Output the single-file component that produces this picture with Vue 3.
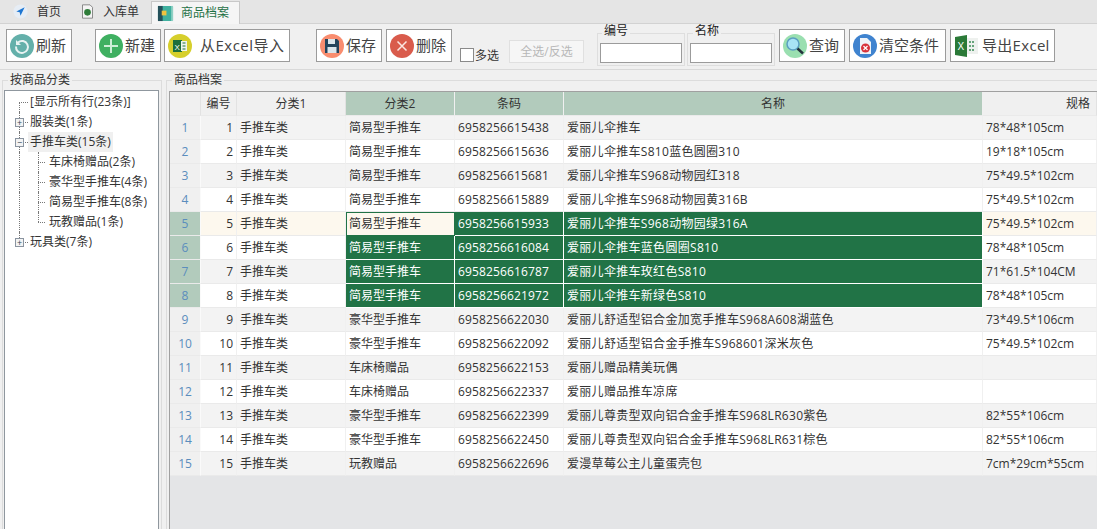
<script setup>
const tree = [
  { label: '[显示所有行(23条)]', kind: 'leaf' },
  { label: '服装类(1条)', kind: 'plus' },
  { label: '手推车类(15条)', kind: 'minus', active: true },
  { label: '车床椅赠品(2条)', kind: 'child' },
  { label: '豪华型手推车(4条)', kind: 'child' },
  { label: '简易型手推车(8条)', kind: 'child' },
  { label: '玩教赠品(1条)', kind: 'child', last: true },
  { label: '玩具类(7条)', kind: 'plus', last: true },
]

const rows = [
  ['手推车类', '简易型手推车', '6958256615438', '爱丽儿伞推车', '78*48*105cm'],
  ['手推车类', '简易型手推车', '6958256615636', '爱丽儿伞推车S810蓝色圆圈310', '19*18*105cm'],
  ['手推车类', '简易型手推车', '6958256615681', '爱丽儿伞推车S968动物园红318', '75*49.5*102cm'],
  ['手推车类', '简易型手推车', '6958256615889', '爱丽儿伞推车S968动物园黄316B', '75*49.5*102cm'],
  ['手推车类', '简易型手推车', '6958256615933', '爱丽儿伞推车S968动物园绿316A', '75*49.5*102cm'],
  ['手推车类', '简易型手推车', '6958256616084', '爱丽儿伞推车蓝色圆圈S810', '78*48*105cm'],
  ['手推车类', '简易型手推车', '6958256616787', '爱丽儿伞推车玫红色S810', '71*61.5*104CM'],
  ['手推车类', '简易型手推车', '6958256621972', '爱丽儿伞推车新绿色S810', '78*48*105cm'],
  ['手推车类', '豪华型手推车', '6958256622030', '爱丽儿舒适型铝合金加宽手推车S968A608湖蓝色', '73*49.5*106cm'],
  ['手推车类', '豪华型手推车', '6958256622092', '爱丽儿舒适型铝合金手推车S968601深米灰色', '75*49.5*102cm'],
  ['手推车类', '车床椅赠品', '6958256622153', '爱丽儿赠品精美玩偶', ''],
  ['手推车类', '车床椅赠品', '6958256622337', '爱丽儿赠品推车凉席', ''],
  ['手推车类', '豪华型手推车', '6958256622399', '爱丽儿尊贵型双向铝合金手推车S968LR630紫色', '82*55*106cm'],
  ['手推车类', '豪华型手推车', '6958256622450', '爱丽儿尊贵型双向铝合金手推车S968LR631棕色', '82*55*106cm'],
  ['手推车类', '玩教赠品', '6958256622696', '爱漫草莓公主儿童蛋壳包', '7cm*29cm*55cm'],
]

const selected = [5, 6, 7, 8]
const isSel = (i) => selected.includes(i + 1)
</script>

<template>
  <div class="page">
    <div class="tabs">
      <div class="tab">
        <svg viewBox="0 0 18 18"><circle cx="9" cy="9" r="8.500" fill="#e6edf5"/><path d="M14 4 4 9l4 1 1 4z" fill="#1d76d2"/></svg>
        <span>首页</span>
      </div>
      <div class="tab t2">
        <svg viewBox="0 0 18 18"><path d="M3 1h9l3 3v13H3z" fill="#f4f4f4" stroke="#777"/><circle cx="9" cy="10" r="4" fill="#2f7d3a"/></svg>
        <span>入库单</span>
      </div>
      <div class="tab on">
        <svg viewBox="0 0 18 18"><rect x="1" y="1" width="16" height="16" rx="1" fill="#3fb09f"/><rect x="1" y="1" width="5" height="16" fill="#24505a"/><rect x="15" y="1" width="2" height="16" fill="#8fd0c4"/><rect x="5" y="6" width="5" height="5" fill="#f0c23e"/></svg>
        <span>商品档案</span>
      </div>
    </div>

    <div class="toolbar">
      <button class="btn b-refresh">
        <svg width="24" height="24" viewBox="0 0 24 24"><circle cx="12" cy="12" r="12" fill="#64b0aa"/><path d="M8 8.500a6 6 0 1 1-2 4" fill="none" stroke="#e8f3f2" stroke-width="2"/><path d="M6 6v5h5z" fill="#e8f3f2"/></svg>
        <span>刷新</span>
      </button>
      <button class="btn b-new">
        <svg width="24" height="24" viewBox="0 0 24 24"><circle cx="12" cy="12" r="12" fill="#3fb061"/><path d="M12 5v14M5 12h14" stroke="#cdeed6" stroke-width="2"/></svg>
        <span>新建</span>
      </button>
      <button class="btn b-import">
        <svg width="24" height="24" viewBox="0 0 24 24"><circle cx="12" cy="12" r="12" fill="#d6cf2c"/><rect x="5" y="6" width="9" height="12" fill="#1e6f3c"/><rect x="13" y="7" width="6" height="10" fill="#eef4ee"/><path d="M14.500 9h3M14.500 12h3M14.500 15h3" stroke="#1e6f3c"/><text x="6.500" y="15.500" font-size="8" fill="#fff" font-family="Liberation Sans">X</text></svg>
        <span class="wide">从Excel导入</span>
      </button>
      <button class="btn b-save">
        <svg width="24" height="24" viewBox="0 0 24 24"><circle cx="12" cy="12" r="12" fill="#f98d6f"/><path d="M5 5h12l2 2v12H5z" fill="#24445c"/><rect x="8" y="5" width="7" height="5" fill="#dce6ec"/><rect x="7.500" y="13" width="9" height="6" fill="#dce6ec"/></svg>
        <span>保存</span>
      </button>
      <button class="btn b-del">
        <svg width="24" height="24" viewBox="0 0 24 24"><circle cx="12" cy="12" r="12" fill="#d95b4c"/><path d="M7.500 7.500l9 9M16.500 7.500l-9 9" stroke="#fbe6e2" stroke-width="1.500"/></svg>
        <span>删除</span>
      </button>
      <label class="multi"><i class="box"></i>多选</label>
      <div class="all">全选/反选</div>
      <fieldset class="field f-code">
        <legend>编号</legend>
        <div class="input"></div>
      </fieldset>
      <fieldset class="field f-name">
        <legend>名称</legend>
        <div class="input"></div>
      </fieldset>
      <button class="btn b-query">
        <svg width="24" height="24" viewBox="0 0 24 24"><circle cx="12" cy="12" r="12" fill="#9adfb0"/><circle cx="10" cy="10" r="6" fill="#a8e4f5" stroke="#5a9fc0" stroke-width="1.500"/><path d="M14.500 14.500l5.500 5" stroke="#24323c" stroke-width="2.500"/></svg>
        <span>查询</span>
      </button>
      <button class="btn b-clear">
        <svg width="24" height="24" viewBox="0 0 24 24"><circle cx="12" cy="12" r="12" fill="#3f83cf"/><path d="M7 4h7l4 4v12H7z" fill="#eef3f8"/><circle cx="12.500" cy="14" r="4.500" fill="#d8323a"/><path d="M10.500 12l4 4M14.500 12l-4 4" stroke="#fff" stroke-width="1.200"/></svg>
        <span>清空条件</span>
      </button>
      <button class="btn b-export">
        <svg width="24" height="24" viewBox="0 0 24 24"><rect x="12" y="4" width="12" height="16" fill="#eef1ee"/><path d="M15 8h6M15 12h6M15 16h6" stroke="#3a8a55" stroke-width="1.500" stroke-dasharray="2 1"/><path d="M1 3l12-2v22L1 21z" fill="#2b7a38"/><text x="3.500" y="16" font-size="10" fill="#fff" font-family="Liberation Sans">X</text></svg>
        <span class="wide">导出Excel</span>
      </button>
    </div>

    <div class="body">
      <fieldset class="side">
        <legend>按商品分类</legend>
        <div class="tree">
          <div v-for="n in tree" :key="n.label" class="node" :class="[n.kind, { last: n.last }]">
            <i v-if="n.kind === 'plus' || n.kind === 'minus'" class="toggle">{{ n.kind === 'plus' ? '+' : '−' }}</i>
            <span class="lbl" :class="{ active: n.active }">{{ n.label }}</span>
          </div>
        </div>
      </fieldset>

      <fieldset class="main">
        <legend>商品档案</legend>
        <div class="grid">
          <div class="row head">
            <div class="c c0"></div>
            <div class="c c1">编号</div>
            <div class="c c2">分类1</div>
            <div class="c c3 hl">分类2</div>
            <div class="c c4 hl">条码</div>
            <div class="c c5 hl">名称</div>
            <div class="c c6 spec">规格</div>
          </div>
          <div v-for="(r, i) in rows" :key="r[2]" class="row" :class="{ odd: i % 2 === 0, cur: i === 4 }">
            <div class="c c0" :class="{ hl: isSel(i) }">{{ i + 1 }}</div>
            <div class="c c1">{{ i + 1 }}</div>
            <div class="c c2">{{ r[0] }}</div>
            <div class="c c3" :class="{ sel: isSel(i) && i !== 4, focus: i === 4 }">{{ r[1] }}</div>
            <div class="c c4" :class="{ sel: isSel(i) }">{{ r[2] }}</div>
            <div class="c c5" :class="{ sel: isSel(i) }">{{ r[3] }}</div>
            <div class="c c6">{{ r[4] }}</div>
          </div>
        </div>
      </fieldset>
    </div>
  </div>
</template>

<style>
html, body { margin: 0; background: #f0f0f0; overflow: hidden; }
</style>

<style scoped>
.page {
  width: 1097px;
  height: 529px;
  overflow: hidden;
  background: #f0f0f0;
  font-family: "Open Sans", "Noto Sans CJK SC", sans-serif;
  font-size: 12px;
  color: #333;
}
.tabs {
  height: 24px;
  background: #e5e5e5;
  border-bottom: 1px solid #d2d2d2;
  display: flex;
  padding-left: 13px;
  box-sizing: border-box;
}
.tab {
  display: flex;
  align-items: center;
  gap: 9px;
  height: 23px;
  margin-right: 19px;
  line-height: 20px;
}
.tab svg { width: 15px; height: 15px; flex: none; }
.tab.t2 { gap: 8px; margin-right: 12px; }
.tab.on {
  margin: 1px 0 0 0;
  padding: 0 10px 0 5px;
  gap: 7px;
  height: 23px;
  box-sizing: border-box;
  background: #f5f5f5;
  border: 1px solid #c8c8c8;
  border-bottom: none;
  color: #1f7145;
}
.tab.on svg { width: 17px; height: 17px; }
.toolbar {
  height: 46px;
  border-bottom: 1px solid #d9d9d9;
  display: flex;
  align-items: flex-start;
  padding: 5px 0 0 6px;
  box-sizing: border-box;
}
.btn {
  height: 33px;
  box-sizing: border-box;
  background: #fff;
  border: 1px solid #9b9b9b;
  border-radius: 0;
  padding: 0 0 0 3px;
  display: flex;
  align-items: center;
  font: inherit;
  font-size: 15px;
  color: #444;
}
.btn svg { flex: none; }
.btn span { margin-left: 2px; white-space: nowrap; line-height: 20px; padding-bottom: 1px; }
.btn .wide { margin-left: 8px; letter-spacing: 0.5px; }
.b-refresh { width: 66px; }
.b-new { width: 66px; margin-left: 23px; }
.b-import { width: 126px; margin-left: 3px; }
.b-save { width: 66px; margin-left: 26px; }
.b-del { width: 66px; margin-left: 4px; }
.b-export .wide { margin-left: 4px; letter-spacing: 0.3px; }
.multi {
  display: flex;
  align-items: center;
  gap: 1px;
  margin: 19px 0 0 8px;
  font-size: 12px;
  height: 14px;
}
.box {
  width: 12px;
  height: 12px;
  background: #fff;
  border: 1px solid #8a8a8a;
  display: block;
}
.all {
  width: 75px;
  height: 23px;
  margin: 11px 0 0 10px;
  box-sizing: border-box;
  border: 1px solid #e0e0e0;
  background: #f6f6f6;
  color: #b8b8b8;
  text-align: center;
  line-height: 21px;
  font-size: 12px;
}
.field {
  margin: -5px 0 0;
  padding: 0 2px;
  border: 1px solid #dedede;
  height: 42px;
  box-sizing: border-box;
  width: 88px;
}
.field legend {
  font-size: 12px;
  padding: 0 2px;
  margin-left: 2px;
  color: #222;
  line-height: 14px;
  height: 18px;
}
.f-code { margin-left: 13px; }
.f-name { margin-left: 2px; }
.f-name legend { margin-left: 3px; }
.input {
  height: 20px;
  box-sizing: border-box;
  background: #fff;
  border: 1px solid #9b9b9b;
  margin-top: 1px;
}
.b-query { width: 66px; margin-left: 4px; }
.b-clear { width: 97px; margin-left: 4px; }
.b-export { width: 105px; margin-left: 4px; }
.body {
  display: flex;
  height: 460px;
  padding: 3px 0 0 2px;
  box-sizing: border-box;
}
.side, .main {
  margin: 0;
  border: 1px solid #dcdcdc;
  box-sizing: border-box;
}
.side legend, .main legend {
  font-size: 12px;
  padding: 0 2px;
  color: #333;
  line-height: 14px;
}
.side legend { margin-left: 4px; }
.main legend { margin-left: 3px; }
.side {
  width: 160px;
  height: 470px;
  padding: 3px 0 0 1px;
  margin-right: 4px;
  flex: none;
}
.tree {
  width: 155px;
  height: 460px;
  box-sizing: border-box;
  background: #fff;
  border: 1px solid #8f979e;
  padding-top: 1px;
}
.node {
  height: 20px;
  line-height: 20px;
  padding-left: 23px;
  position: relative;
  white-space: nowrap;
}
.node::before {
  content: "";
  position: absolute;
  left: 14px;
  top: 10px;
  width: 9px;
  border-top: 1px dotted #777;
}
.node::after {
  content: "";
  position: absolute;
  left: 14px;
  top: 0;
  height: 20px;
  border-left: 1px dotted #777;
}
.node.leaf::after { top: 10px; height: 10px; }
.node.last::after { height: 10px; }
.node.child { padding-left: 42px; }
.node.child::before { left: 33px; width: 7px; }
.node.child::after { left: 33px; }
/* 父节点的竖线穿过子节点行 */
.node.child .lbl::before {
  content: "";
  position: absolute;
  left: 14px;
  top: 0;
  height: 20px;
  border-left: 1px dotted #777;
}
.toggle {
  position: absolute;
  left: 10px;
  top: 6px;
  width: 9px;
  height: 9px;
  box-sizing: border-box;
  background: #f3f3f3;
  border: 1px solid #8a94a0;
  font-style: normal;
  font-size: 9px;
  line-height: 7px;
  text-align: center;
  color: #345;
  z-index: 1;
}
.lbl { padding: 0 2px; display: inline-block; }
.lbl.active { background: #f0f0f0; }
.main {
  width: 945px;
  height: 470px;
  padding: 4px 0 0 2px;
  flex: none;
}
.grid {
  background: #e4e5e7;
  border-top: 1px solid #a0a0a0;
  border-left: 1px solid #a0a0a0;
  height: 450px;
  overflow: hidden;
}
.row {
  display: flex;
  height: 24px;
  background: #fff;
}
.row.odd { background: #f3f3f3; }
.row.cur { background: #fdf8ee; }
.row.head { background: #f0f0f0; height: 24px; }
.c {
  box-sizing: border-box;
  height: 24px;
  line-height: 23px;
  padding: 0 3px;
  border-right: 1px solid #f0f0f0;
  border-bottom: 1px solid #eaeaea;
  white-space: nowrap;
  overflow: hidden;
  flex: none;
  color: #333;
}
.head .c { text-align: center; border-right-color: #e2e2e2; }
.c0 {
  width: 31px;
  background: #f0f0f0;
  color: #5b8dbd;
  text-align: center;
  border-right-color: #fafafa;
}
.c1 { width: 36px; text-align: right; }
.c2 { width: 109px; }
.c3 { width: 109px; }
.c4 { width: 109px; letter-spacing: 0.14px; }
.c5 { width: 419px; letter-spacing: 0.3px; }
.head .c4, .head .c5 { letter-spacing: 0; }
.c6 { width: 114px; }
.head .c6.spec { text-align: right; padding-right: 6px; }
.hl { background: #b2cbbc; }
.head .hl { border-right-color: #f0f0f0; }
.sel {
  background: #217346;
  color: #fff;
  border-right-color: #fff;
  border-bottom-color: #fff;
}
.focus {
  border: 1px solid #217346;
  background: #fdf8ee;
  line-height: 21px;
  padding: 0 2px;
}
</style>
